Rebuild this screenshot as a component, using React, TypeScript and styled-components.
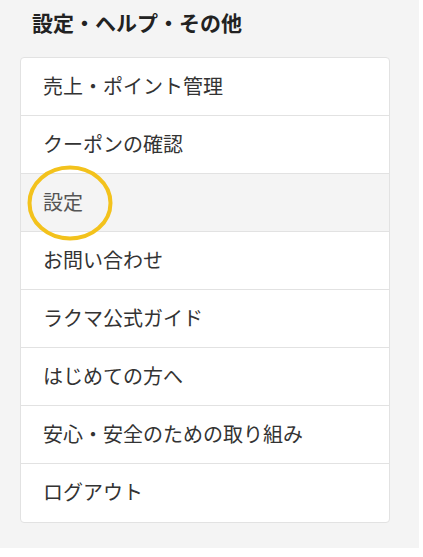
import React from 'react';
import styled, { createGlobalStyle } from 'styled-components';

const GlobalStyle = createGlobalStyle`
  html, body {
    margin: 0;
    padding: 0;
    background: #ffffff;
  }
  body {
    font-family: "Noto Sans CJK JP", "Noto Sans", sans-serif;
  }
`;

const menuItems = [
  '売上・ポイント管理',
  'クーポンの確認',
  '設定',
  'お問い合わせ',
  'ラクマ公式ガイド',
  'はじめての方へ',
  '安心・安全のための取り組み',
  'ログアウト',
];

const SELECTED = '設定';

const App: React.FC = () => {
  return (
    <>
      <GlobalStyle />
      <Page>
        <Title>設定・ヘルプ・その他</Title>
        <Card>
          {menuItems.map((label) => (
            <Row key={label} active={label === SELECTED}>
              <Label active={label === SELECTED}>{label}</Label>
              {label === SELECTED && (
                <Marker width="92" height="82" viewBox="0 0 92 82">
                  <ellipse cx="46" cy="41" rx="40.5" ry="35.5" fill="none" stroke="#f3c21c" strokeWidth="4" />
                </Marker>
              )}
            </Row>
          ))}
        </Card>
      </Page>
    </>
  );
};

const Page = styled.div`
  width: 419px;
  height: 548px;
  box-sizing: border-box;
  background: #f4f4f4;
  padding: 10px 29px 0 20px;
`;

const Title = styled.h2`
  margin: 0 0 23px 12px;
  font-size: 21px;
  line-height: 24px;
  font-weight: 700;
  color: #222222;
`;

const Card = styled.ul`
  list-style: none;
  margin: 0;
  padding: 0;
  background: #ffffff;
  border: 1px solid #e2e2e2;
  border-radius: 4px;
  overflow: visible;
`;

const Row = styled.li<{ active?: boolean }>`
  position: relative;
  display: flex;
  align-items: center;
  height: 57px;
  padding: 0 22px;
  background: ${({ active }) => (active ? '#f4f4f4' : 'transparent')};
  border-bottom: 1px solid #e2e2e2;
  &:first-child {
    height: 57px;
  }
  &:last-child {
    border-bottom: none;
    height: 58px;
    border-radius: 0 0 4px 4px;
  }
`;

const Label = styled.span<{ active?: boolean }>`
  font-size: 20px;
  line-height: 24px;
  margin-top: -2px;
  color: ${({ active }) => (active ? '#555555' : '#333333')};
`;

const Marker = styled.svg`
  position: absolute;
  left: 3px;
  top: -12px;
  pointer-events: none;
`;

export default App;
